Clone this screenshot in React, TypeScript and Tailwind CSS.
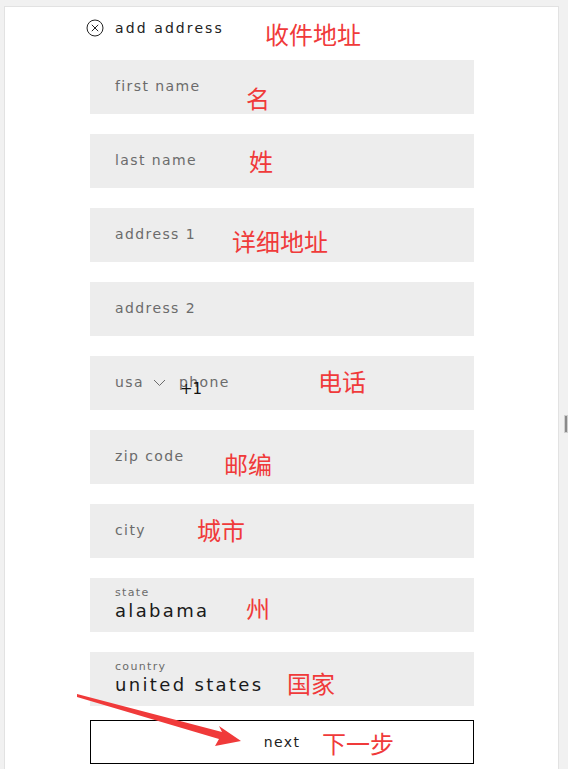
const fields = [
  { label: 'first name' },
  { label: 'last name' },
  { label: 'address 1' },
  { label: 'address 2' },
]

const notes = [
  { text: '收件地址', cls: 'left-[265px] top-[22px]' },
  { text: '名', cls: 'left-[246px] top-[86px]' },
  { text: '姓', cls: 'left-[249px] top-[149px]' },
  { text: '详细地址', cls: 'left-[232px] top-[229px]' },
  { text: '电话', cls: 'left-[318px] top-[369px]' },
  { text: '邮编', cls: 'left-[224px] top-[452px]' },
  { text: '城市', cls: 'left-[197px] top-[518px]' },
  { text: '州', cls: 'left-[246px] top-[596px]' },
  { text: '国家', cls: 'left-[287px] top-[671px]' },
  { text: '下一步', cls: 'left-[322px] top-[731px]' },
]

const Field = ({ label }: { label: string }) => (
  <div className="h-[54px] bg-[#ededed] pl-[25px] pt-[18px] text-[14px] leading-4 tracking-[0.1em] text-[#6b6b6b]">
    {label}
  </div>
)

const FilledField = ({ label, value }: { label: string; value: string }) => (
  <div className="h-[54px] bg-[#ededed] pl-[25px] pt-[8px]">
    <div className="text-[11px] leading-[13px] tracking-[0.12em] text-[#6b6b6b]">{label}</div>
    <div className="mt-[2px] text-[18px] leading-5 tracking-[0.13em] text-[#1a1a1a]">{value}</div>
  </div>
)

export default function App() {
  return (
    <div
      className="relative h-[769px] overflow-hidden bg-[#f1f1f1] pl-[4px] pr-[9px] pt-[6px]"
      style={{ fontFamily: '"DejaVu Sans", "Noto Sans", sans-serif' }}
    >
      <div className="h-full border-l border-r border-t border-[#e2e2e2] bg-white pl-[81px] pt-[13px]">
        {/* header */}
        <div className="flex h-4 items-center">
          <svg width="18" height="18" viewBox="0 0 18 18" className="text-[#222]">
            <circle cx="9" cy="9" r="8" fill="none" stroke="currentColor" strokeWidth="1" />
            <path d="M5.8 5.8 L12.2 12.2 M12.2 5.8 L5.8 12.2" stroke="currentColor" strokeWidth="1" />
          </svg>
          <span className="ml-[11px] text-[14px] tracking-[0.15em] text-[#222]">add address</span>
        </div>

        <div className="ml-[4px] mt-[24px] flex w-[384px] flex-col gap-[20px]">
          {fields.map((f) => (
            <Field key={f.label} label={f.label} />
          ))}

          {/* phone */}
          <div className="relative flex h-[54px] items-start bg-[#ededed] pl-[25px] pt-[18px] text-[14px] leading-4 tracking-[0.1em] text-[#6b6b6b]">
            <span>usa</span>
            <svg width="13" height="8" viewBox="0 0 13 8" className="ml-[9px] mt-[5px]">
              <polyline points="1,1 6.5,6.5 12,1" fill="none" stroke="#6b6b6b" strokeWidth="1" />
            </svg>
            <span className="ml-[13px]">phone</span>
            <span className="absolute left-[90px] top-[25px] text-[15px] tracking-normal text-[#111]">+1</span>
          </div>

          <Field label="zip code" />
          <Field label="city" />
          <FilledField label="state" value="alabama" />
          <FilledField label="country" value="united states" />
        </div>

        <button className="ml-[4px] mt-[14px] flex h-[44px] w-[384px] items-center justify-center border border-black bg-white text-[14px] tracking-[0.1em] text-[#222]">
          next
        </button>
      </div>

      {/* scrollbar tab */}
      <div className="absolute right-0 top-[415px] h-[18px] w-[4px] border border-[#cfcfcf] bg-[#8a8a8a]" />

      {/* red annotations */}
      {notes.map((n) => (
        <span
          key={n.text}
          className={`absolute text-[24px] leading-6 text-[#f03a3a] ${n.cls}`}
          style={{ fontFamily: '"Noto Sans CJK SC", sans-serif' }}
        >
          {n.text}
        </span>
      ))}

      <svg className="absolute left-0 top-0" width="568" height="769" viewBox="0 0 568 769">
        <polygon points="77,694 222,732 219,726 241,741 215,746 219,739 77,697" fill="#f03a3a" />
      </svg>
    </div>
  )
}
